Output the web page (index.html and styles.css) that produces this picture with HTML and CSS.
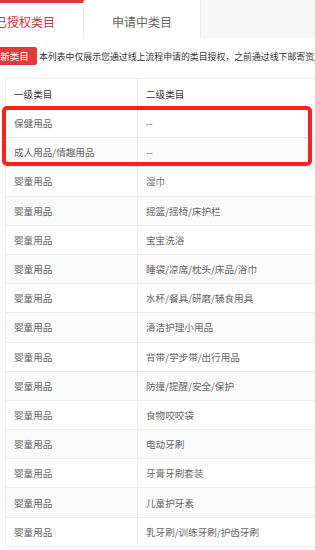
FILE: index.html
```
<!DOCTYPE html>
<html lang="zh-CN">
	<head>
		<meta charset="UTF-8" />
		<meta name="viewport" content="width=device-width, initial-scale=1.0" />
		<title>类目授权</title>
		<link rel="stylesheet" href="styles.css">
	</head>
	<body>
		<div class="page">
			<div class="tabs">
				<div class="tab active">已授权类目</div>
				<div class="tab">申请中类目</div>
				<div class="tab-rest"></div>
			</div>
			<div class="toolbar">
				<button class="btn">申请新类目</button>
				<span class="tip">本列表中仅展示您通过线上流程申请的类目授权，之前通过线下邮寄资质申请的类目授权请联系对接人员查询</span>
			</div>
			<div class="table-wrap">
				<table>
					<thead>
						<tr><th class="col1">一级类目</th><th>二级类目</th></tr>
					</thead>
					<tbody>
						<tr><td>保健用品</td><td>--</td></tr>
						<tr><td>成人用品/情趣用品</td><td>--</td></tr>
						<tr><td>婴童用品</td><td>湿巾</td></tr>
						<tr><td>婴童用品</td><td>摇篮/摇椅/床护栏</td></tr>
						<tr><td>婴童用品</td><td>宝宝洗浴</td></tr>
						<tr><td>婴童用品</td><td>睡袋/凉席/枕头/床品/浴巾</td></tr>
						<tr><td>婴童用品</td><td>水杯/餐具/研磨/辅食用具</td></tr>
						<tr><td>婴童用品</td><td>清洁护理小用品</td></tr>
						<tr><td>婴童用品</td><td>背带/学步带/出行用品</td></tr>
						<tr><td>婴童用品</td><td>防撞/提醒/安全/保护</td></tr>
						<tr><td>婴童用品</td><td>食物咬咬袋</td></tr>
						<tr><td>婴童用品</td><td>电动牙刷</td></tr>
						<tr><td>婴童用品</td><td>牙膏牙刷套装</td></tr>
						<tr><td>婴童用品</td><td>儿童护牙素</td></tr>
						<tr><td>婴童用品</td><td>乳牙刷/训练牙刷/护齿牙刷</td></tr>
					</tbody>
				</table>
				<div class="mark"></div>
			</div>
		</div>
	</body>
</html>
```

FILE: styles.css
```
* {
	margin: 0;
	padding: 0;
	box-sizing: border-box;
	font-family: "Noto Sans CJK SC", "Noto Sans", sans-serif;
}

body {
	background-color: #fff;
	width: 315px;
	height: 550px;
	overflow: hidden;
}

.page {
	width: 315px;
	overflow: hidden;
}

.tabs {
	display: flex;
	height: 38px;
	margin-left: -33px;
	background-color: #f7f7f7;
}

.tab {
	width: 117px;
	height: 38px;
	padding-top: 5px;
	display: flex;
	align-items: center;
	justify-content: center;
	background: white;
	border-right: 1px solid #ececec;
	font-size: 12px;
	color: #666;
}

.tab.active {
	border-top: 3px solid #e4393c;
	padding-top: 2px;
	color: #c9343a;
}

.tab-rest {
	flex: 1;
}

.toolbar {
	display: flex;
	align-items: center;
	height: 18px;
	margin-top: 9px;
	white-space: nowrap;
}

.btn {
	flex-shrink: 0;
	height: 18px;
	margin-left: -27px;
	padding: 0 8px;
	background-color: #e4393c;
	color: white;
	border: none;
	border-radius: 2px;
	font-size: 9.6px;
}

.tip {
	margin-left: 2px;
	font-size: 8.9px;
	color: #333;
}

.table-wrap {
	position: relative;
	margin-top: 13px;
	margin-left: 5px;
}

table {
	width: 340px;
	border-collapse: collapse;
	border-top: 1px solid #ececec;
	border-left: 1px solid #ececec;
}

th,
td {
	padding-left: 8px;
	text-align: left;
	font-size: 9.6px;
	font-weight: 400;
	border-right: 1px solid #ececec;
	border-bottom: 1px solid #ececec;
}

th {
	height: 30px;
	color: #333;
}

td {
	height: 29.2px;
	color: #666;
}

.col1 {
	width: 132px;
}

tbody tr:nth-child(even) {
	background-color: #fafafa;
}

.mark {
	position: absolute;
	left: -3px;
	top: 28px;
	width: 310px;
	height: 60px;
	border: 4px solid #ff1f1f;
	border-radius: 5px;
}
```
